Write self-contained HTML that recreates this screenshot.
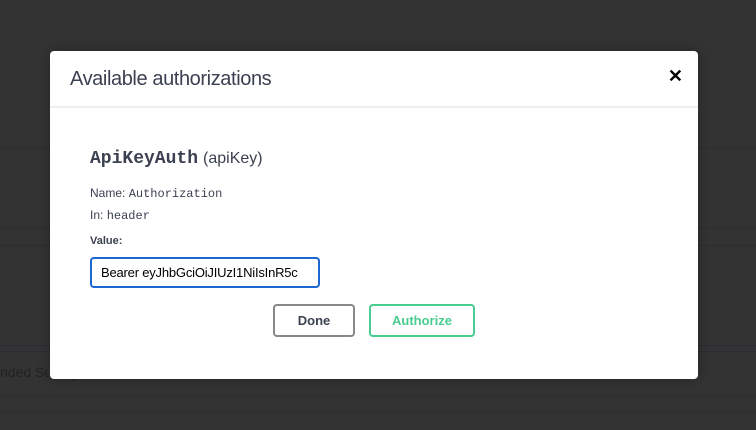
<!DOCTYPE html>
<html><head><meta charset="utf-8"><style>
body{margin:0;width:756px;height:430px;background:#333;position:relative;overflow:hidden;font-family:"Liberation Sans",sans-serif}
.ln{position:absolute;left:0;right:0;height:1px;background:#2a2d33}
.modal{position:absolute;left:50px;top:51px;width:648px;height:328px;background:#fff;border-radius:4px;box-shadow:0 0 12px rgba(0,0,0,.3)}
.hd{height:55px;border-bottom:2px solid #eee;position:relative}
.hd h3{margin:0;position:absolute;left:20px;top:17px;font-size:20px;font-weight:normal;color:#3b4151;letter-spacing:-0.4px}
.x{position:absolute;right:15px;top:15px;font-size:18px;font-weight:bold;color:#000}
.t{position:absolute;color:#3b4151}
.btn{position:absolute;height:33px;border-radius:4px;font-weight:bold;font-size:13px;text-align:center;line-height:30px;box-sizing:border-box}
</style></head><body>
<div class="ln" style="top:148px"></div>
<div class="ln" style="top:228px"></div>
<div class="ln" style="top:245px"></div>
<div class="ln" style="top:345px"></div>
<div class="ln" style="top:351px"></div>
<div class="ln" style="top:395px"></div>
<div class="ln" style="top:411px"></div>
<div class="t" style="left:0;top:364px;color:#222;font-size:14px">nded Survey</div>
<div class="modal">
<div class="hd"><h3>Available authorizations</h3><div class="x">✕</div></div>
<div class="t" style="left:40px;top:96px;font-size:18px"><span style="font-family:'Liberation Mono',monospace;font-weight:bold">ApiKeyAuth</span> <span style="font-size:16px">(apiKey)</span></div>
<div class="t" style="left:40px;top:135px;font-size:12px">Name: <span style="font-family:'Liberation Mono',monospace">Authorization</span></div>
<div class="t" style="left:40px;top:157px;font-size:12px">In: <span style="font-family:'Liberation Mono',monospace">header</span></div>
<div class="t" style="left:40px;top:184px;font-size:11px;font-weight:bold">Value:</div>
<div style="position:absolute;left:40px;top:206px;width:230px;height:31px;box-sizing:border-box;border:2px solid #1a66d2;border-radius:4px;font-size:13px;letter-spacing:-0.2px;line-height:27px;padding-left:9px;color:#000;overflow:hidden;white-space:nowrap">Bearer eyJhbGciOiJIUzI1NiIsInR5c</div>
<div class="btn" style="left:223px;top:253px;width:82px;border:2px solid #888;color:#3b4151">Done</div>
<div class="btn" style="left:319px;top:253px;width:106px;border:2px solid #49cc90;color:#49cc90">Authorize</div>
</div>
</body></html>
